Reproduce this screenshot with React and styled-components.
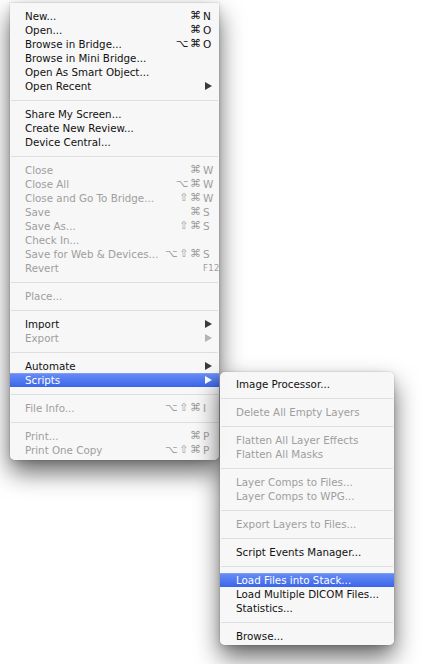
import React from "react";
import styled, { createGlobalStyle, css } from "styled-components";

const Global = createGlobalStyle`
  html, body { margin: 0; padding: 0; background: #ffffff; }
  body { width: 425px; height: 664px; overflow: hidden; }
`;

const Page = styled.div`
  padding: 3px 0 0 10px;
  font-family: "DejaVu Sans", "Noto Sans", sans-serif;
  font-size: 10.3px;
  -webkit-font-smoothing: antialiased;
`;

const Menu = styled.div`
  position: relative;
  width: ${(p) => p.$width}px;
  box-sizing: border-box;
  padding: ${(p) => (p.$sub ? "5px 0 2px" : "6px 0 3px")};
  background: rgba(247, 247, 247, 0.98);
  border-radius: ${(p) => (p.$sub ? "5px" : "0 0 5px 5px")};
  box-shadow: 0 12px 24px rgba(0, 0, 0, 0.6), 0 2px 6px rgba(0, 0, 0, 0.12),
    0 0 0 1px rgba(0, 0, 0, 0.05);
  display: flex;
  flex-direction: column;
`;

const SubMenuWrap = styled.div`
  position: absolute;
  top: -1px;
  left: calc(100% + 1px);
  z-index: 2;
`;

const Row = styled.div`
  position: relative;
  height: 14px;
  line-height: 14px;
  display: flex;
  align-items: center;
  padding: 0 6px 0 ${(p) => p.$indent}px;
  color: ${(p) => (p.$disabled ? "#9e9e9e" : "#111111")};
  white-space: nowrap;
  ${(p) =>
    p.$active &&
    css`
      color: #ffffff;
      background: linear-gradient(#6a8ef6, #3a65e9);
      box-shadow: inset 0 1px 0 rgba(255, 255, 255, 0.15);
    `}
`;

const Label = styled.span`
  flex: 1;
`;

const Shortcut = styled.span`
  display: flex;
  align-items: center;
  font-size: 10.5px;
`;

const Mods = styled.span`
  font-size: 11px;
  letter-spacing: 1.5px;
  margin-right: 0.5px;
`;

const Key = styled.span`
  width: 10px;
  overflow: visible;
  font-size: ${(p) => (p.$small ? "8.5px" : "10.5px")};
  ${(p) => p.$small && css`letter-spacing: 0.3px;`}
`;

const Arrow = styled.svg`
  width: 7px;
  height: 8px;
  margin-right: 1px;
  fill: ${(p) => (p.$active ? "#ffffff" : p.$disabled ? "#b4b4b4" : "#3a3a3a")};
`;

const Separator = styled.div`
  height: 14px;
  display: flex;
  align-items: center;
  padding: 0 1px;
  &::after {
    content: "";
    flex: 1;
    height: 1px;
    background: #dedede;
  }
`;

const mainMenu = [
  [
    { label: "New...", mods: "⌘", key: "N" },
    { label: "Open...", mods: "⌘", key: "O" },
    { label: "Browse in Bridge...", mods: "⌥⌘", key: "O" },
    { label: "Browse in Mini Bridge..." },
    { label: "Open As Smart Object..." },
    { label: "Open Recent", arrow: true },
  ],
  [
    { label: "Share My Screen..." },
    { label: "Create New Review..." },
    { label: "Device Central..." },
  ],
  [
    { label: "Close", mods: "⌘", key: "W", disabled: true },
    { label: "Close All", mods: "⌥⌘", key: "W", disabled: true },
    { label: "Close and Go To Bridge...", mods: "⇧⌘", key: "W", disabled: true },
    { label: "Save", mods: "⌘", key: "S", disabled: true },
    { label: "Save As...", mods: "⇧⌘", key: "S", disabled: true },
    { label: "Check In...", disabled: true },
    { label: "Save for Web & Devices...", mods: "⌥⇧⌘", key: "S", disabled: true },
    { label: "Revert", key: "F12", small: true, disabled: true },
  ],
  [{ label: "Place...", disabled: true }],
  [
    { label: "Import", arrow: true },
    { label: "Export", arrow: true, disabled: true },
  ],
  [
    { label: "Automate", arrow: true },
    { label: "Scripts", arrow: true, active: true, submenu: true },
  ],
  [{ label: "File Info...", mods: "⌥⇧⌘", key: "I", disabled: true }],
  [
    { label: "Print...", mods: "⌘", key: "P", disabled: true },
    { label: "Print One Copy", mods: "⌥⇧⌘", key: "P", disabled: true },
  ],
];

const scriptsMenu = [
  [{ label: "Image Processor..." }],
  [{ label: "Delete All Empty Layers", disabled: true }],
  [
    { label: "Flatten All Layer Effects", disabled: true },
    { label: "Flatten All Masks", disabled: true },
  ],
  [
    { label: "Layer Comps to Files...", disabled: true },
    { label: "Layer Comps to WPG...", disabled: true },
  ],
  [{ label: "Export Layers to Files...", disabled: true }],
  [{ label: "Script Events Manager..." }],
  [
    { label: "Load Files into Stack...", active: true },
    { label: "Load Multiple DICOM Files..." },
    { label: "Statistics..." },
  ],
  [{ label: "Browse..." }],
];

function Item({ item, indent, children }) {
  return (
    <Row $indent={indent} $disabled={item.disabled} $active={item.active}>
      <Label>{item.label}</Label>
      {item.key && (
        <Shortcut>
          {item.mods && <Mods>{item.mods}</Mods>}
          <Key $small={item.small}>{item.key}</Key>
        </Shortcut>
      )}
      {item.arrow && (
        <Arrow viewBox="0 0 7 8" $active={item.active} $disabled={item.disabled}>
          <path d="M0 0 L7 4 L0 8 Z" />
        </Arrow>
      )}
      {children}
    </Row>
  );
}

function MenuList({ groups, indent, width, sub, submenu }) {
  return (
    <Menu $width={width} $sub={sub}>
      {groups.map((group, gi) => (
        <React.Fragment key={gi}>
          {gi > 0 && <Separator />}
          {group.map((item) => (
            <Item key={item.label} item={item} indent={indent}>
              {item.submenu && submenu}
            </Item>
          ))}
        </React.Fragment>
      ))}
    </Menu>
  );
}

export default function App() {
  return (
    <>
      <Global />
      <Page>
        <MenuList
          groups={mainMenu}
          indent={15}
          width={209}
          submenu={
            <SubMenuWrap>
              <MenuList groups={scriptsMenu} indent={16} width={174} sub />
            </SubMenuWrap>
          }
        />
      </Page>
    </>
  );
}
